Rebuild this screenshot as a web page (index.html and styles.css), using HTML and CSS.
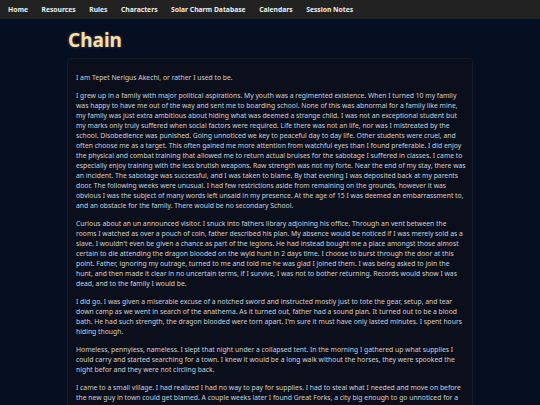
FILE: index.html
```
<!DOCTYPE html>
<html lang="en">
<head>
<meta charset="utf-8">
<title>Chain</title>
<link rel="stylesheet" href="styles.css">
</head>
<body>
<nav class="topnav">
  <a href="#">Home</a>
  <a href="#">Resources</a>
  <a href="#">Rules</a>
  <a href="#">Characters</a>
  <a href="#">Solar Charm Database</a>
  <a href="#">Calendars</a>
  <a href="#">Session Notes</a>
</nav>
<main class="page">
  <h1 class="title">Chain</h1>
  <article class="card">
    <p>I am Tepet Nerigus Akechi, or rather I used to be.</p>
    <p>I grew up in a family with major political aspirations. My youth was a regimented existence. When I turned 10 my family was happy to have me out of the way and sent me to boarding school. None of this was abnormal for a family like mine, my family was just extra ambitious about hiding what was deemed a strange child. I was not an exceptional student but my marks only truly suffered when social factors were required. Life there was not an life, nor was I mistreated by the school. Disobedience was punished. Going unnoticed we key to peaceful day to day life. Other students were cruel, and often choose me as a target. This often gained me more attention from watchful eyes than I found preferable. I did enjoy the physical and combat training that allowed me to return actual bruises for the sabotage I suffered in classes. I came to especially enjoy training with the less brutish weapons. Raw strength was not my forte. Near the end of my stay, there was an incident. The sabotage was successful, and I was taken to blame. By that evening I was deposited back at my parents door. The following weeks were unusual. I had few restrictions aside from remaining on the grounds, however it was obvious I was the subject of many words left unsaid in my presence. At the age of 15 I was deemed an embarrassment to, and an obstacle for the family. There would be no secondary School.</p>
    <p>Curious about an un announced visitor. I snuck into fathers library adjoining his office. Through an vent between the rooms I watched as over a pouch of coin, father described his plan. My absence would be noticed if I was merely sold as a slave. I wouldn't even be given a chance as part of the legions. He had instead bought me a place amongst those almost certain to die attending the dragon blooded on the wyld hunt in 2 days time. I choose to burst through the door at this point. Father, ignoring my outrage, turned to me and told me he was glad I joined them. I was being asked to join the hunt, and then made it clear in no uncertain terms, if I survive, I was not to bother returning. Records would show I was dead, and to the family I would be.</p>
    <p>I did go. I was given a miserable excuse of a notched sword and instructed mostly just to tote the gear, setup, and tear down camp as we went in search of the anathema. As it turned out, father had a sound plan. It turned out to be a blood bath. He had such strength, the dragon blooded were torn apart. I'm sure it must have only lasted minutes. I spent hours hiding though.</p>
    <p>Homeless, pennyless, nameless. I slept that night under a collapsed tent. In the morning I gathered up what supplies I could carry and started searching for a town. I knew it would be a long walk without the horses, they were spooked the night befor and they were not circling back.</p>
    <p>I came to a small village. I had realized I had no way to pay for supplies. I had to steal what I needed and move on before the new guy in town could get blamed. A couple weeks later I found Great Forks, a city big enough to go unnoticed for a while. I took to stealing in the markets and sleeping in the alleys, always moving and keeping out of sight of the guards.</p>
  </article>
</main>
</body>
</html>
```
FILE: styles.css
```
* { box-sizing: border-box; }
html, body {
  margin: 0;
  padding: 0;
}
body {
  background: #060e21;
  color: #cfd2d9;
  font-family: "Noto Sans", "Open Sans", sans-serif;
  height: 405px;
  overflow: hidden;
}
.topnav {
  display: flex;
  align-items: center;
  gap: 13.5px;
  height: 19px;
  padding: 0 8px;
  background: #222222;
}
.topnav a {
  color: #eeeeee;
  text-decoration: none;
  font-weight: 700;
  font-size: 6.75px;
}
.page {
  width: 406px;
  margin: 0 auto;
}
.title {
  margin: 11px 0 8px 1px;
  font-size: 19px;
  line-height: 20px;
  font-weight: 700;
  color: #f2dfb2;
  text-shadow: 0 0 3px rgba(220, 180, 110, 0.45);
}
.card {
  background: #0b0f1b;
  border: 1px solid #151b29;
  border-radius: 4px;
  padding: 14px 6px 10px 8px;
}
.card p {
  margin: 0 0 8px 0;
  font-size: 6.8px;
  line-height: 10px;
}
```
